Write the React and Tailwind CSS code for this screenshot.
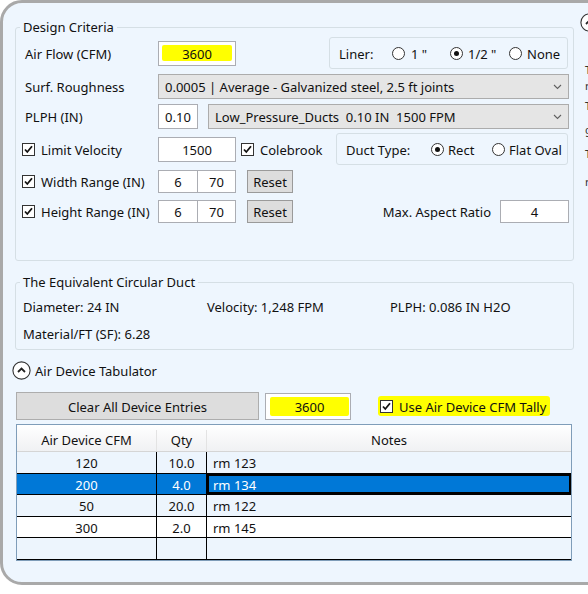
import React from "react";

// small downward nudge so Noto Sans sits like the original Segoe UI text
const tx = "pt-[3px]";

function Check() {
  return (
    <span className="w-[13px] h-[13px] border border-[#333] bg-white flex items-center justify-center shrink-0">
      <svg width="11" height="11" viewBox="0 0 11 11">
        <path d="M2 5.5 L4.3 8 L9 2.3" fill="none" stroke="#111" strokeWidth="1.8" />
      </svg>
    </span>
  );
}

function Radio({ on }) {
  return (
    <span className="w-[13px] h-[13px] rounded-full border border-[#333] bg-white flex items-center justify-center shrink-0">
      {on && <span className="w-[5px] h-[5px] rounded-full bg-[#111]" />}
    </span>
  );
}

function Chevron() {
  return (
    <svg width="9" height="6" viewBox="0 0 9 6" className="shrink-0">
      <path d="M1 1 L4.5 4.5 L8 1" fill="none" stroke="#606060" strokeWidth="1.1" />
    </svg>
  );
}

function CircleUp() {
  return (
    <svg width="19" height="19" viewBox="0 0 19 19" className="shrink-0">
      <circle cx="9.5" cy="9.5" r="8.6" fill="white" stroke="#333" strokeWidth="1.1" />
      <path d="M6 11 L9.5 7.5 L13 11" fill="none" stroke="#222" strokeWidth="1.8" />
    </svg>
  );
}

function Combo({ children, className = "" }) {
  return (
    <div className={`h-[25px] bg-[#e5e5e5] border border-[#acacac] flex items-center pl-[6px] pr-[6px] ${className}`}>
      <span className={`flex-1 whitespace-pre ${tx}`}>{children}</span>
      <Chevron />
    </div>
  );
}

function Box({ className = "", children }) {
  return (
    <div className={`bg-white border border-[#abadb3] flex items-center justify-center pt-[3px] ${className}`}>
      {children}
    </div>
  );
}

const rows = [
  { cfm: "120", qty: "10.0", note: "rm 123", bg: "bg-[#edf5fd]", h: "h-[22px]" },
  { cfm: "200", qty: "4.0", note: "rm 134", sel: true, h: "h-[21px]" },
  { cfm: "50", qty: "20.0", note: "rm 122", bg: "bg-[#edf5fd]", h: "h-[22px]" },
  { cfm: "300", qty: "2.0", note: "rm 145", bg: "bg-white", h: "h-[21px]" },
  { cfm: "", qty: "", note: "", bg: "bg-[#edf5fd]", h: "h-[22px]" },
];

export default function App() {
  return (
    <div className="w-[588px] h-[594px] overflow-hidden bg-white text-[13px] text-[#111] font-['Noto_Sans','Open_Sans',sans-serif]">
      <div className="w-[640px] h-[585px] rounded-[22px] border-[3px] border-[#a9a9a9] bg-[#eef6fe] flex">
        {/* Main column */}
        <div className="w-[571px] shrink-0 pl-[12px] pt-[14px] flex flex-col">
          {/* Design Criteria */}
          <fieldset className="w-[559px] border border-[#d5dfe5] rounded-[3px] pb-[37px]">
            <legend className="ml-[4px] px-[3px] leading-[20px]">Design Criteria</legend>

            <div className="flex items-center h-[32px]">
              <span className={`ml-[9px] w-[133px] ${tx}`}>Air Flow (CFM)</span>
              <div className="w-[78px] h-[25px] bg-white border border-[#abadb3] flex items-center justify-center">
                <span className="bg-[#ffff00] w-[70px] h-[16px] flex items-center justify-center rounded-[2px] pt-[3px]">3600</span>
              </div>
              <div className="ml-auto mr-[5px] w-[239px] h-[32px] border border-[#d5dfe5] rounded-[3px] flex items-center pl-[9px]">
                <span className={`w-[53px] ${tx}`}>Liner:</span>
                <div className="w-[58px] flex items-center">
                  <Radio />
                  <span className={`ml-[6px] ${tx}`}>1 "</span>
                </div>
                <div className="w-[59px] flex items-center">
                  <Radio on />
                  <span className={`ml-[5px] ${tx}`}>1/2 "</span>
                </div>
                <div className="flex items-center">
                  <Radio />
                  <span className={`ml-[5px] ${tx}`}>None</span>
                </div>
              </div>
            </div>

            <div className="flex items-center h-[25px] mt-[5px]">
              <span className={`ml-[9px] w-[133px] shrink-0 ${tx}`}>Surf. Roughness</span>
              <Combo className="flex-1 mr-[4px]">0.0005 | Average - Galvanized steel, 2.5 ft joints</Combo>
            </div>

            <div className="flex items-center h-[25px] mt-[5px]">
              <span className={`ml-[9px] w-[133px] shrink-0 ${tx}`}>PLPH (IN)</span>
              <Box className="w-[40px] h-[25px] shrink-0">0.10</Box>
              <Combo className="flex-1 ml-[10px] mr-[4px]">{"Low_Pressure_Ducts  0.10 IN  1500 FPM"}</Combo>
            </div>

            <div className="flex items-center h-[32px] mt-[4px]">
              <span className="ml-[6px]"><Check /></span>
              <span className={`ml-[6px] w-[117px] ${tx}`}>Limit Velocity</span>
              <Box className="w-[78px] h-[25px]">1500</Box>
              <span className="ml-[5px]"><Check /></span>
              <span className={`ml-[6px] ${tx}`}>Colebrook</span>
              <div className="ml-auto mr-[5px] w-[232px] h-[32px] border border-[#d5dfe5] rounded-[3px] flex items-center pl-[9px]">
                <span className={`w-[85px] ${tx}`}>Duct Type:</span>
                <div className="w-[61px] flex items-center">
                  <Radio on />
                  <span className={`ml-[4px] ${tx}`}>Rect</span>
                </div>
                <div className="flex items-center">
                  <Radio />
                  <span className={`ml-[4px] ${tx}`}>Flat Oval</span>
                </div>
              </div>
            </div>

            <div className="flex items-center h-[23px] mt-[5px]">
              <span className="ml-[6px]"><Check /></span>
              <span className={`ml-[6px] w-[117px] ${tx}`}>Width Range (IN)</span>
              <Box className="w-[40px] h-[23px]">6</Box>
              <Box className="w-[38px] h-[23px] border-l-0">70</Box>
              <div className="ml-[11px] w-[46px] h-[23px] bg-[#dddddd] border border-[#9a9a9a] flex items-center justify-center pt-[3px]">Reset</div>
            </div>

            <div className="flex items-center h-[23px] mt-[7px]">
              <span className="ml-[6px]"><Check /></span>
              <span className={`ml-[6px] w-[117px] ${tx}`}>Height Range (IN)</span>
              <Box className="w-[40px] h-[23px]">6</Box>
              <Box className="w-[38px] h-[23px] border-l-0">70</Box>
              <div className="ml-[11px] w-[46px] h-[23px] bg-[#dddddd] border border-[#9a9a9a] flex items-center justify-center pt-[3px]">Reset</div>
              <span className={`ml-auto ${tx}`}>Max. Aspect Ratio</span>
              <Box className="ml-[9px] mr-[4px] w-[69px] h-[23px]">4</Box>
            </div>
          </fieldset>

          {/* Equivalent circular duct */}
          <fieldset className="w-[559px] mt-[11px] border border-[#d5dfe5] rounded-[3px] pb-[6px]">
            <legend className="ml-[4px] px-[3px] leading-[20px]">The Equivalent Circular Duct</legend>
            <div className={`flex items-center h-[20px] mt-[4px] pl-[7px] ${tx}`}>
              <span className="w-[184px]">Diameter: 24 IN</span>
              <span className="w-[183px]">Velocity: 1,248 FPM</span>
              <span>PLPH: 0.086 IN H2O</span>
            </div>
            <div className={`flex items-center h-[20px] mt-[7px] pl-[7px] ${tx}`}>
              <span>Material/FT (SF): 6.28</span>
            </div>
          </fieldset>

          {/* Air device tabulator */}
          <div className="flex items-center h-[20px] mt-[10px] -ml-[3px]">
            <CircleUp />
            <span className={`ml-[4px] ${tx}`}>Air Device Tabulator</span>
          </div>

          <div className="flex items-center h-[28px] mt-[12px] ml-[1px]">
            <div className="w-[243px] h-[28px] bg-[#dddddd] border border-[#adadad] flex items-center justify-center pt-[3px]">
              Clear All Device Entries
            </div>
            <div className="ml-[6px] w-[86px] h-[27px] bg-white border border-[#abadb3] flex items-center justify-end pr-[1px]">
              <span className="bg-[#ffff00] w-[79px] h-[19px] flex items-center justify-center rounded-[2px] pt-[3px]">3600</span>
            </div>
            <div className="ml-[27px] h-[20px] px-[2px] bg-[#ffff00] rounded-[3px] flex items-center">
              <Check />
              <span className={`ml-[6px] pr-[2px] ${tx}`}>Use Air Device CFM Tally</span>
            </div>
          </div>

          {/* Table */}
          <div className="w-[556px] mt-[4px] ml-[1px] border border-[#7f9db9] flex flex-col">
            <div className="flex h-[27px] pt-[5px] bg-gradient-to-b from-white to-[#f0f1f3] border-b border-[#d5d5d5]">
              <div className="w-[140px] flex items-center justify-center border-r border-[#e3e3e3]">Air Device CFM</div>
              <div className="w-[50px] flex items-center justify-center border-r border-[#e3e3e3]">Qty</div>
              <div className="flex-1 flex items-center justify-center">Notes</div>
            </div>
            {rows.map((r, i) => (
              <div
                key={i}
                className={`flex ${r.h} border-b border-black ${r.sel ? "bg-[#0078d7] text-white" : r.bg}`}
              >
                <div className="w-[140px] flex items-center justify-center border-r border-black pt-[3px]">{r.cfm}</div>
                <div className="w-[50px] flex items-center justify-center border-r border-black pt-[3px]">{r.qty}</div>
                <div
                  className={`flex-1 flex items-center pl-[6px] pt-[3px] ${r.sel ? "shadow-[inset_0_0_0_2px_#000]" : ""}`}
                >
                  {r.note}
                </div>
              </div>
            ))}
          </div>
        </div>

        {/* Clipped column on the right */}
        <div className="pl-[6px] pt-[10px] flex flex-col">
          <CircleUp />
          <div className="ml-[5px] mt-[30px] flex flex-col text-[11px] leading-[16px] text-[#333]">
            <span>T</span>
            <span>r</span>
            <span className="mt-[4px]">T</span>
            <span className="mt-[8px]">g</span>
            <span className="mt-[8px]">T</span>
            <span className="mt-[12px]">r</span>
          </div>
        </div>
      </div>
    </div>
  );
}
